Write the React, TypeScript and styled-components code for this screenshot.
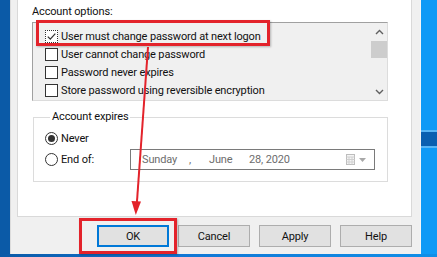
import React from "react";
import styled, { createGlobalStyle } from "styled-components";

const GlobalStyle = createGlobalStyle`
  html, body { margin: 0; padding: 0; }
  body {
    width: 437px;
    height: 257px;
    overflow: hidden;
    font-family: Roboto, "Liberation Sans", sans-serif;
    font-size: 11px;
    letter-spacing: -0.15px;
    color: #111;
  }
  * { box-sizing: border-box; }
`;

const Screen = styled.div`
  position: relative;
  width: 437px;
  height: 257px;
  display: flex;
  flex-direction: column;
  background: #0f8fe8;
`;

const Main = styled.div`
  display: flex;
  height: 254px;
`;

const LeftDesk = styled.div`
  width: 10px;
  background: #0b5aa7;
`;

const RightDesk = styled.div`
  width: 17px;
  background: #0f9af6;
  border-left: 1px solid #f6f6f6;
  display: flex;
  flex-direction: column;
  padding-top: 130px;
`;

const DeskBand = styled.div`
  height: 18px;
  background: #0a5fb0;
  border-top: 2px solid #58b5f5;
  border-bottom: 2px solid #58b5f5;
`;

const BottomStrip = styled.div`
  height: 3px;
  background: linear-gradient(to right, #0b5aa7, #1176d4 40%, #0f8fe8);
`;

const Dialog = styled.div`
  width: 410px;
  background: #f0f0f0;
  border-left: 1px solid #dcdcdc;
  padding: 0 8px 0 6px;
  display: flex;
  flex-direction: column;
`;

const Panel = styled.div`
  height: 217px;
  background: #fff;
  border: 1px solid #d9d9d9;
  border-top: none;
  padding: 4px 23px 0 14px;
  display: flex;
  flex-direction: column;
`;

const Label = styled.div`
  line-height: 15px;
  height: 15px;
  margin-bottom: 3px;
`;

const ListBox = styled.div`
  height: 79px;
  width: 356px;
  display: flex;
  background: #f0f0f0;
  border-top: 1px solid #a0a0a0;
  border-left: 1px solid #a0a0a0;
  border-right: 1px solid #dcdcdc;
  border-bottom: 1px solid #dcdcdc;
`;

const Items = styled.div`
  flex: 1;
  padding: 4px 0 0 12px;
  display: flex;
  flex-direction: column;
`;

const Item = styled.div`
  height: 18px;
  display: flex;
  align-items: center;
  gap: 3px;
  white-space: nowrap;
`;

const Box = styled.span<{ $focus?: boolean }>`
  width: 13px;
  height: 13px;
  background: #fff;
  border: 1px ${(p) => (p.$focus ? "dotted" : "solid")} #333;
  display: inline-flex;
  align-items: center;
  justify-content: center;
  flex: none;
`;

const ScrollBar = styled.div`
  width: 16px;
  display: flex;
  flex-direction: column;
  background: #f0f0f0;
`;

const ScrollBtn = styled.div`
  height: 17px;
  display: flex;
  align-items: center;
  justify-content: center;
`;

const ScrollTrack = styled.div`
  flex: 1;
  display: flex;
  flex-direction: column;
`;

const Thumb = styled.div`
  height: 17px;
  margin-top: 1px;
  background: #cdcdcd;
`;

const GroupBox = styled.fieldset`
  margin: 9px 0 0 1px;
  width: 355px;
  height: 72px;
  border: 1px solid #dcdcdc;
  padding: 4px 12px 0 11px;
  display: flex;
  flex-direction: column;
`;

const Legend = styled.legend`
  padding: 0 2px;
  margin-left: 5px;
  line-height: 14px;
`;

const RadioRow = styled.div`
  height: 21px;
  display: flex;
  align-items: center;
  gap: 3px;
`;

const Radio = styled.span<{ $on?: boolean }>`
  width: 13px;
  height: 13px;
  border-radius: 50%;
  border: 1px solid #333;
  background: #fff;
  display: inline-flex;
  align-items: center;
  justify-content: center;
  flex: none;
  &::after {
    content: "";
    width: 7px;
    height: 7px;
    border-radius: 50%;
    background: ${(p) => (p.$on ? "#333" : "transparent")};
  }
`;

const DatePicker = styled.div`
  margin-left: auto;
  width: 245px;
  height: 21px;
  border: 1px solid #7a7a7a;
  background: #fff;
  color: #6d6d6d;
  display: flex;
  align-items: center;
  padding: 0 8px 0 11px;
`;

const Seg = styled.span<{ $w?: number }>`
  width: ${(p) => (p.$w ? `${p.$w}px` : "auto")};
  flex: none;
  white-space: nowrap;
`;

const DropIcons = styled.div`
  margin-left: auto;
  display: flex;
  align-items: center;
  gap: 4px;
`;

const ButtonRow = styled.div`
  display: flex;
  justify-content: flex-end;
  gap: 9px;
  margin-top: 8px;
`;

const Button = styled.button<{ $default?: boolean }>`
  width: 72px;
  height: 22px;
  font: inherit;
  letter-spacing: inherit;
  color: #111;
  background: #e1e1e1;
  border: ${(p) => (p.$default ? "2px solid #0078d7" : "1px solid #adadad")};
  padding: 0;
`;

const Overlay = styled.svg`
  position: absolute;
  left: 0;
  top: 0;
  pointer-events: none;
`;

const Highlight = styled.div<{ $x: number; $y: number; $w: number; $h: number }>`
  position: absolute;
  left: ${(p) => p.$x}px;
  top: ${(p) => p.$y}px;
  width: ${(p) => p.$w}px;
  height: ${(p) => p.$h}px;
  border: 3px solid #e3232b;
  box-shadow: 1px 1px 2px rgba(0, 0, 0, 0.25);
`;

const Check = () => (
  <svg width="11" height="11" viewBox="0 0 11 11">
    <path d="M1.8 5.6 L4.3 8.1 L9.3 2.6" fill="none" stroke="#333" strokeWidth="1.3" />
  </svg>
);

const Chevron = ({ up }: { up?: boolean }) => (
  <svg width="9" height="6" viewBox="0 0 9 6">
    <path
      d={up ? "M1 5 L4.5 1.5 L8 5" : "M1 1 L4.5 4.5 L8 1"}
      fill="none"
      stroke="#606060"
      strokeWidth="1.4"
    />
  </svg>
);

const CalendarIcon = () => (
  <svg width="9" height="11" viewBox="0 0 9 11">
    <rect x="0.5" y="0.5" width="8" height="10" fill="#f4f4f4" stroke="#bdbdbd" />
    <path d="M0.5 3 H8.5 M0.5 5.5 H8.5 M0.5 8 H8.5 M3 3 V10.5 M6 3 V10.5" stroke="#d0d0d0" strokeWidth="1" />
  </svg>
);

const DropArrow = () => (
  <svg width="7" height="4" viewBox="0 0 7 4">
    <path d="M0 0 H7 L3.5 4 Z" fill="#a8a8a8" />
  </svg>
);

const options = [
  "User must change password at next logon",
  "User cannot change password",
  "Password never expires",
  "Store password using reversible encryption",
];

export default function App() {
  return (
    <>
      <GlobalStyle />
      <Screen>
        <Main>
          <LeftDesk />
          <Dialog>
            <Panel>
              <Label>Account options:</Label>
              <ListBox>
                <Items>
                  {options.map((o, i) => (
                    <Item key={o}>
                      <Box $focus={i === 0}>{i === 0 && <Check />}</Box>
                      <span>{o}</span>
                    </Item>
                  ))}
                </Items>
                <ScrollBar>
                  <ScrollBtn>
                    <Chevron up />
                  </ScrollBtn>
                  <ScrollTrack>
                    <Thumb />
                  </ScrollTrack>
                  <ScrollBtn>
                    <Chevron />
                  </ScrollBtn>
                </ScrollBar>
              </ListBox>
              <GroupBox>
                <Legend>Account expires</Legend>
                <RadioRow>
                  <Radio $on />
                  <span>Never</span>
                </RadioRow>
                <RadioRow>
                  <Radio />
                  <span>End of:</span>
                  <DatePicker>
                    <Seg $w={47}>Sunday</Seg>
                    <Seg $w={20}>,</Seg>
                    <Seg $w={40}>June</Seg>
                    <Seg>28, 2020</Seg>
                    <DropIcons>
                      <CalendarIcon />
                      <DropArrow />
                    </DropIcons>
                  </DatePicker>
                </RadioRow>
              </GroupBox>
            </Panel>
            <ButtonRow>
              <Button $default>OK</Button>
              <Button>Cancel</Button>
              <Button>Apply</Button>
              <Button>Help</Button>
            </ButtonRow>
          </Dialog>
          <RightDesk>
            <DeskBand />
          </RightDesk>
        </Main>
        <BottomStrip />
        <Highlight $x={36} $y={20} $w={234} $h={26} />
        <Highlight $x={79} $y={218} $w={98} $h={36} />
        <Overlay width="437" height="257" viewBox="0 0 437 257">
          <line x1="148" y1="47" x2="136.8" y2="204" stroke="#e3232b" strokeWidth="2" />
          <path d="M131.5 201 L141 201.6 L135.8 215 Z" fill="#e3232b" />
        </Overlay>
      </Screen>
    </>
  );
}
